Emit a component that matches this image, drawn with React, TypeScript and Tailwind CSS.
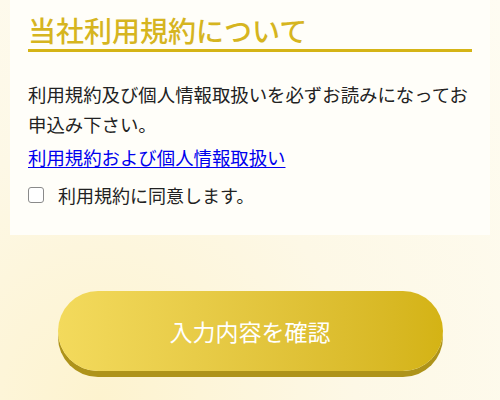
export default function App() {
  return (
    <div
      className="relative h-[400px] w-full overflow-hidden bg-[#fdf8e4] bg-[radial-gradient(ellipse_at_20%_100%,#fdf3cf_0%,#fdf8e6_45%,#fefcf2_100%)]"
      style={{ fontFamily: '"Noto Sans CJK JP", "Noto Sans", sans-serif' }}
    >
      <div className="mx-[10px] bg-[#fffef9] px-[18px] pt-[12px] pb-[25px]">
        <h2 className="border-b-[3px] border-[#d5b416] text-[28px] leading-[37px] font-medium text-[#d6b51f]">
          当社利用規約について
        </h2>
        <p className="mt-[27px] text-[18.4px] leading-[30px] text-[#222]">
          利用規約及び個人情報取扱いを必ずお読みになってお申込み下さい。
        </p>
        <a
          href="#"
          className="mt-[3px] block text-[18.4px] leading-[30px] text-[#0000ee] underline underline-offset-2"
        >
          利用規約および個人情報取扱い
        </a>
        <label className="mt-[8px] flex h-[30px] items-center text-[18px] text-[#222]">
          <input
            type="checkbox"
            className="h-[16px] w-[16px] appearance-none rounded-[3px] border border-[#8a8a8a] bg-white"
          />
          <span className="ml-[14px]">利用規約に同意します。</span>
        </label>
      </div>
      <div className="mt-[56px] flex justify-center">
        <button className="h-[80px] w-[385px] rounded-full bg-gradient-to-r from-[#f3da5c] to-[#d4b314] text-[23px] text-white shadow-[0_6px_0_#ae931a]">
          入力内容を確認
        </button>
      </div>
    </div>
  );
}
